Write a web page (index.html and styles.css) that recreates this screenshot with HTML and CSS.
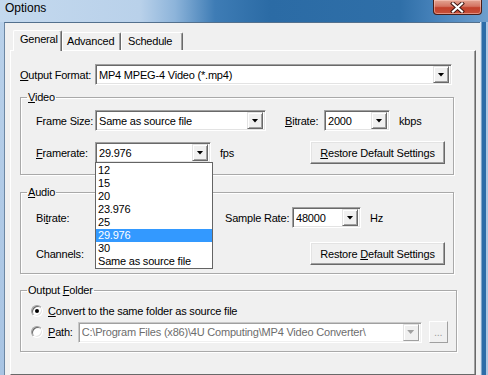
FILE: index.html
```html
<!DOCTYPE html>
<html lang="en">
<head>
    <meta charset="UTF-8">
    <title>Options</title>
    <link rel="stylesheet" href="styles.css">
</head>
<body>

<div class="titlebar">
    <span class="title">Options</span>
    <span class="close">
        <svg width="15" height="11" viewBox="0 0 15 11">
            <path d="M3 1.5 L12 9.5 M12 1.5 L3 9.5" stroke="#3b1410" stroke-width="4" stroke-linecap="square"/>
            <path d="M3 1.5 L12 9.5 M12 1.5 L3 9.5" stroke="#ffffff" stroke-width="2.2" stroke-linecap="square"/>
        </svg>
    </span>
</div>

<div class="frame">
    <div class="client">
        <div class="tabs">
            <div class="tab active">General</div>
            <div class="tab tab-advanced">Advanced</div>
            <div class="tab tab-schedule">Schedule</div>
        </div>

        <div class="panel">
            <div class="row format-row">
                <span class="lbl lbl-format"><u>O</u>utput Format:</span>
                <div class="combo combo-format"><span class="value">MP4 MPEG-4 Video (*.mp4)</span><span class="arrow"></span></div>
            </div>

            <fieldset class="group group-video">
                <legend><u>V</u>ideo</legend>
                <div class="row">
                    <span class="lbl">Frame Size:</span>
                    <div class="combo combo-size"><span class="value">Same as source file</span><span class="arrow"></span></div>
                    <span class="lbl-side"><u>B</u>itrate:</span>
                    <div class="combo combo-small"><span class="value">2000</span><span class="arrow"></span></div>
                    <span class="unit">kbps</span>
                </div>
                <div class="row row-second">
                    <span class="lbl"><u>F</u>ramerate:</span>
                    <div class="combo combo-rate">
                        <span class="value">29.976</span><span class="arrow"></span>
                        <ul class="droplist">
                            <li>12</li>
                            <li>15</li>
                            <li>20</li>
                            <li>23.976</li>
                            <li>25</li>
                            <li class="selected">29.976</li>
                            <li>30</li>
                            <li>Same as source file</li>
                        </ul>
                    </div>
                    <span class="unit">fps</span>
                    <button class="btn btn-restore"><u>R</u>estore Default Settings</button>
                </div>
            </fieldset>

            <fieldset class="group group-audio">
                <legend><u>A</u>udio</legend>
                <div class="row">
                    <span class="lbl">Bi<u>t</u>rate:</span>
                    <div class="combo combo-rate"><span class="value"></span><span class="arrow"></span></div>
                    <span class="lbl-sample">Sample Rate:</span>
                    <div class="combo combo-sample"><span class="value">48000</span><span class="arrow"></span></div>
                    <span class="unit">Hz</span>
                </div>
                <div class="row row-channels">
                    <span class="lbl">Channels:</span>
                    <div class="combo combo-rate"><span class="value"></span><span class="arrow"></span></div>
                    <button class="btn btn-restore">Restore <u>D</u>efault Settings</button>
                </div>
            </fieldset>

            <fieldset class="group group-folder">
                <legend>Output <u>F</u>older</legend>
                <div class="radio-row">
                    <span class="radio checked"></span>
                    <span><u>C</u>onvert to the same folder as source file</span>
                </div>
                <div class="radio-row path-row">
                    <span class="radio"></span>
                    <span class="lbl-path"><u>P</u>ath:</span>
                    <div class="combo combo-path disabled"><span class="value">C:\Program Files (x86)\4U Computing\MP4 Video Converter\</span><span class="arrow"></span></div>
                    <button class="btn btn-browse" disabled>...</button>
                </div>
            </fieldset>
        </div>
    </div>
    <div class="edge"></div>
</div>

</body>
</html>
```

FILE: styles.css
```css
* {
    box-sizing: border-box;
}
body {
    margin: 0;
    width: 488px;
    height: 375px;
    overflow: hidden;
    font-family: "Liberation Sans", Arial, sans-serif;
    font-size: 11px;
    letter-spacing: -0.2px;
    color: #000;
    background: #b8d0ea;
    display: flex;
    flex-direction: column;
    white-space: nowrap;
}
u {
    text-decoration-thickness: 1px;
    text-underline-offset: 1px;
}

/* title bar */
.titlebar {
    height: 22px;
    flex: none;
    display: flex;
    justify-content: space-between;
    align-items: flex-start;
    letter-spacing: 0;
    background: linear-gradient(90deg, #c4d9ee 0, #b9d1ea 140px, #8db4da 175px, #3e7cb5 215px, #2b6ba5 270px, #2f6fa8 400px, #4a85bd 440px, #6e9fcd 488px);
}
.title {
    font-size: 12px;
    line-height: 14px;
    padding: 1px 0 0 5px;
}
.close {
    width: 49px;
    height: 15px;
    margin-right: 6px;
    display: flex;
    align-items: center;
    justify-content: center;
    border: 1px solid #4a1d17;
    border-top: none;
    border-radius: 0 0 4px 4px;
    background: linear-gradient(#e3a594 0, #d47462 45%, #c2402b 55%, #c7503a 100%);
    box-shadow: inset 0 0 0 1px rgba(255, 210, 200, 0.5);
}

/* window frame */
.frame {
    flex: 1;
    display: flex;
    padding-left: 4px;
    background: linear-gradient(#b9d1ea, #a8c4e3);
}
.client {
    width: 476px;
    flex: none;
    display: flex;
    flex-direction: column;
    background: #f0f0f0;
    border-left: 1px solid #6c87a3;
    border-top: 1px solid #53708d;
}
.edge {
    flex: 1;
    background: linear-gradient(90deg, #dbe6f2 0 1px, #7ea4c8 1px 2px, #2b6ca8 2px 6px, #a9c6e4 6px);
}

/* tabs */
.tabs {
    display: flex;
    align-items: flex-end;
    height: 20px;
    margin-top: 7px;
    padding-left: 8px;
}
.tab {
    height: 18px;
    padding: 2px 0 0 5px;
    border: 1px solid;
    border-color: #fff #696969 transparent #fff;
    border-bottom: none;
    border-radius: 2px 2px 0 0;
    box-shadow: inset -1px 0 #a0a0a0;
    background: #f0f0f0;
}
.tab.active {
    position: relative;
    width: 49px;
    height: 21px;
    margin-bottom: -1px;
    padding-top: 2px;
    padding-left: 6px;
}
.tab-advanced {
    width: 59px;
    padding-left: 4px;
}
.tab-schedule {
    width: 62px;
    padding-left: 6px;
}

/* panel */
.panel {
    flex: 1;
    width: 466px;
    margin-left: 5px;
    padding: 13px 0 0 9px;
    border: 1px solid;
    border-color: #fff #696969 #696969 #fff;
    box-shadow: inset -1px 0 #a0a0a0;
}
.row {
    display: flex;
    align-items: center;
}
.lbl {
    width: 59px;
    flex: none;
}
.lbl-format {
    width: 75px;
}
.lbl-side {
    margin-left: 19px;
    width: 39px;
    flex: none;
}
.lbl-sample {
    margin-left: 14px;
    width: 67px;
    flex: none;
}
.unit {
    margin-left: 9px;
}

/* combo boxes */
.combo {
    position: relative;
    height: 21px;
    flex: none;
    display: flex;
    align-items: center;
    background: #fff;
    border: 1px solid;
    border-color: #a0a0a0 #fff #fff #a0a0a0;
    box-shadow: inset 1px 1px #696969, inset -1px -1px #e3e3e3;
    padding: 2px 2px 2px 3px;
}
.combo .value {
    flex: 1;
    overflow: hidden;
}
.combo .arrow {
    width: 16px;
    height: 17px;
    flex: none;
    display: flex;
    align-items: center;
    justify-content: center;
    background: #f0f0f0;
    border: 1px solid;
    border-color: #e3e3e3 #696969 #696969 #e3e3e3;
    box-shadow: inset 1px 1px #fff, inset -1px -1px #a0a0a0;
}
.combo .arrow::after {
    content: "";
    width: 7px;
    height: 4px;
    background: #000;
    clip-path: polygon(0 0, 100% 0, 50% 100%);
}
.combo-format {
    width: 357px;
}
.combo-size {
    width: 171px;
}
.combo-small {
    width: 66px;
}
.combo-rate {
    width: 116px;
}
.combo-sample {
    width: 69px;
}
.combo-path {
    width: 344px;
    margin-left: 5px;
}
.combo.disabled {
    background: #fff;
    color: #6d6d6d;
    border-color: #c8c8c8 #fff #fff #c8c8c8;
    box-shadow: inset 1px 1px #a0a0a0, inset -1px -1px #f0f0f0;
}
.combo.disabled .arrow {
    border-color: #e3e3e3 #a0a0a0 #a0a0a0 #e3e3e3;
    box-shadow: inset 1px 1px #fff;
}
.combo.disabled .arrow::after {
    background: #a0a0a0;
}

/* open framerate list */
.droplist {
    position: absolute;
    top: 19px;
    left: -1px;
    z-index: 5;
    width: 118px;
    margin: 0;
    padding: 1px 0 0;
    list-style: none;
    background: #fff;
    border: 1px solid #646464;
}
.droplist li {
    height: 13px;
    line-height: 13px;
    padding-left: 2px;
}
.droplist li.selected {
    background: #3399ff;
    color: #fff;
}

/* buttons */
.btn {
    font: inherit;
    letter-spacing: inherit;
    color: #000;
    background: #f0f0f0;
    border: 1px solid;
    border-color: #fff #696969 #696969 #fff;
    box-shadow: inset -1px -1px #a0a0a0, inset 1px 1px #e3e3e3;
    padding: 0;
}
.btn-restore {
    width: 135px;
    height: 23px;
    margin-left: auto;
}
.btn-browse {
    width: 19px;
    height: 22px;
    margin-left: 7px;
    color: #a0a0a0;
    border-color: #fff #a0a0a0 #a0a0a0 #fff;
    box-shadow: none;
}

/* group boxes */
.group {
    width: 434px;
    margin: 0;
    padding: 0 8px 8px 15px;
    border: 1px solid #a9a9a9;
    box-shadow: 1px 1px #fff, inset 1px 1px #fff;
}
.group legend {
    margin-left: -9px;
    padding: 0 1px;
    line-height: 13px;
}
.group-video {
    margin-top: 6px;
    padding-top: 6px;
    padding-bottom: 10px;
}
.row-second {
    margin-top: 10px;
}
.group-audio {
    margin-top: 11px;
    padding-top: 8px;
}
.row-channels {
    margin-top: 14px;
}
.group-folder {
    margin-top: 10px;
    padding-top: 5px;
    padding-left: 10px;
}
.group-folder legend {
    margin-left: -4px;
}

/* radios */
.radio-row {
    display: flex;
    align-items: center;
    height: 17px;
}
.path-row {
    height: 22px;
    margin-top: 2px;
}
.radio {
    width: 12px;
    height: 12px;
    flex: none;
    margin-right: 5px;
    border-radius: 50%;
    border: 1px solid;
    border-color: #a0a0a0 #fff #fff #a0a0a0;
    box-shadow: inset 1px 1px #696969, inset -1px -1px #e3e3e3;
    background: #fff;
    display: flex;
    align-items: center;
    justify-content: center;
}
.radio.checked::after {
    content: "";
    width: 4px;
    height: 4px;
    border-radius: 50%;
    background: #000;
}
```
